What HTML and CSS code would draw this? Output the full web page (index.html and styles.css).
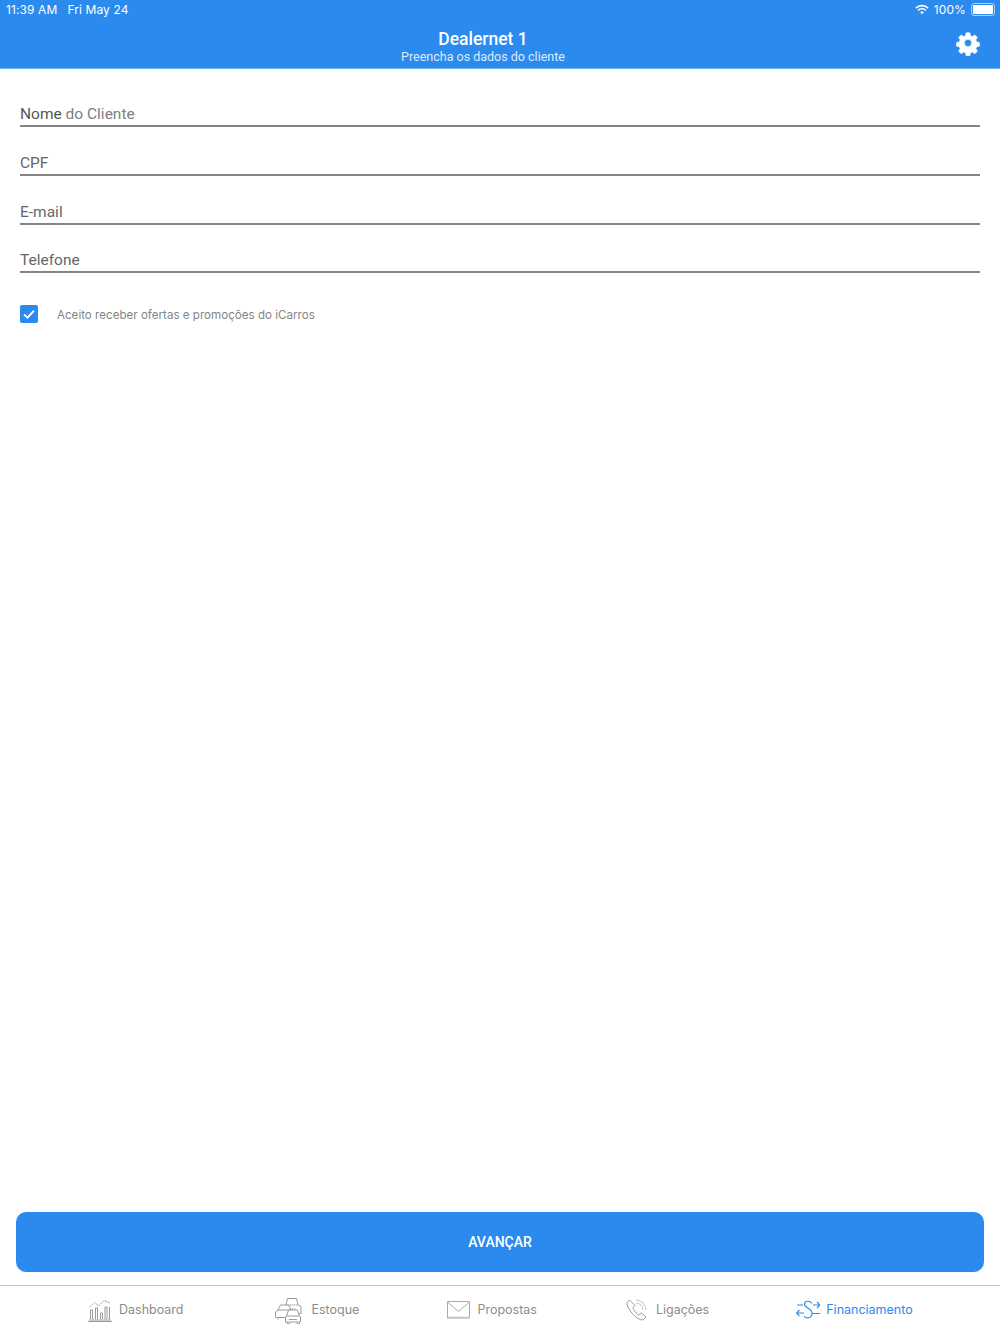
FILE: index.html
```html
<!DOCTYPE html>
<html lang="pt-BR">
<head>
    <meta charset="UTF-8">
    <meta name="viewport" content="width=device-width, initial-scale=1.0">
    <title>Dealernet 1</title>
    <link rel="stylesheet" href="styles.css">
</head>
<body>
    <div class="app">
        <header class="header">
            <div class="status-bar">
                <div class="status-left">
                    <span>11:39 AM</span>
                    <span>Fri May 24</span>
                </div>
                <div class="status-right">
                    <svg class="wifi" viewBox="0 0 16 12" width="14" height="11">
                        <path d="M1 4.4a10 10 0 0 1 14 0" fill="none" stroke="#fff" stroke-width="1.8"/>
                        <path d="M3.6 7a6.300 6.300 0 0 1 8.800 0" fill="none" stroke="#fff" stroke-width="1.8"/>
                        <path d="M5.900 9.100a3 3 0 0 1 4.200 0L8 11.400z" fill="#fff"/>
                    </svg>
                    <span>100%</span>
                    <div class="battery"><div class="battery-fill"></div></div>
                </div>
            </div>
            <div class="nav-bar">
                <div class="nav-titles">
                    <div class="nav-title">Dealernet 1</div>
                    <div class="nav-subtitle">Preencha os dados do cliente</div>
                </div>
                <svg class="gear" viewBox="0 0 24 24" width="26" height="26">
                    <path fill="#fff" stroke="#fff" stroke-width=".7" stroke-linejoin="round" fill-rule="evenodd" d="M10 1h4l.6 3 2.200.9 2.600-1.700 2.800 2.800-1.700 2.600.9 2.200 3 .6v4l-3 .6-.9 2.200 1.700 2.600-2.800 2.800-2.600-1.700-2.200.9-.6 3h-4l-.6-3-2.200-.9-2.600 1.700-2.800-2.800 1.700-2.600-.9-2.200-3-.6v-4l3-.6.9-2.200-1.700-2.600 2.800-2.800 2.600 1.700 2.200-.9zM12 8a4 4 0 1 0 0 8 4 4 0 0 0 0-8z" transform="translate(1.800 1.800) scale(.85)"/>
                </svg>
            </div>
        </header>

        <main class="form">
            <div class="field"><span class="filled">Nome</span> <span class="hint">do Cliente</span></div>
            <div class="field">CPF</div>
            <div class="field">E-mail</div>
            <div class="field">Telefone</div>
            <div class="optin">
                <div class="checkbox">
                    <svg viewBox="0 0 18 18" width="18" height="18">
                        <path d="M4 9.400l3.500 3.300L14 5.600" fill="none" stroke="#fff" stroke-width="2"/>
                    </svg>
                </div>
                <span class="optin-label">Aceito receber ofertas e promoções do iCarros</span>
            </div>
        </main>

        <div class="actions">
            <button class="next-btn">AVANÇAR</button>
        </div>

        <nav class="tabs">
            <div class="tab">
                <svg viewBox="0 0 24 24" width="24" height="24" fill="none" stroke="#9a9a9a" stroke-width="1">
                    <path d="M0 23.500h24M1 22h22"/>
                    <path d="M2.500 21v-9M4.500 21v-9M2.500 12h2M7.500 21V10M9.500 21V10M7.500 10h2M12.500 21v-6M14.500 21v-6M12.500 15h2M17 21V9M19 21V9M17 9h2M21.500 21V9"/>
                    <path d="M1.500 9l5-4.500 4.500 3.500 5-5.500 6 2.500" stroke-dasharray="2 1"/>
                </svg>
                <span>Dashboard</span>
            </div>
            <div class="tab tab-wide">
                <svg viewBox="0 0 27 27" width="27" height="27" fill="#fff" stroke="#9a9a9a" stroke-width="1">
                    <path d="M11 8l1.500-6.500h9L23 8l3 1.500v7H11z"/>
                    <path d="M11 8h12M13 12h8" stroke-dasharray="1.500 .5"/>
                    <path d="M3 13l2.500-5h8L16 13l1 1v6.500H.5V15z"/>
                    <path d="M3 13h13M3 20.500v2M14 20.500v2"/>
                    <path d="M11.500 19l2-6h9l2 6 1 1v5H10.500v-5z"/>
                    <path d="M12 19h12M14 22.500h8M12 25v1.500h2.500V25M22 25v1.500h2.500V25"/>
                </svg>
                <span>Estoque</span>
            </div>
            <div class="tab">
                <svg viewBox="0 0 23 18" width="23" height="18" fill="none" stroke="#aaaaaa" stroke-width="1">
                    <path d="M.5.5h22v16.500H.5zM.5 1l11 9.500L22.500 1"/>
                    <path d="M1 16.500h21" stroke="#c4c4c4" stroke-width="1.500"/>
                </svg>
                <span>Propostas</span>
            </div>
            <div class="tab tab-phone">
                <svg viewBox="0 0 22 22" width="22" height="22" fill="none" stroke="#9a9a9a" stroke-width="1">
                    <path d="M3.500 1L1 3.500c-.5 6 9.500 18 16 17.500l3-3-4.500-4-2.500 2c-2-.5-6-5.500-6-7.500l2-2z"/>
                    <path d="M10 4a7 7 0 0 1 7 7M10 1a10 10 0 0 1 10 10" stroke="#c4c4c4"/>
                </svg>
                <span>Ligações</span>
            </div>
            <div class="tab tab-active">
                <svg viewBox="0 0 24 20" width="24" height="20" fill="none" stroke="#2a8aee" stroke-width="1.100">
                    <path d="M1 5h6M17 5h7M21 2l3 3-3 3M8 13H.5M3.500 10l-3 3 3 3M16 13.500h8"/>
                    <path d="M16 3.500C14 .5 9 .5 8.500 4 8 8 16 8 16 13c0 5.500-6 6-8 3"/>
                </svg>
                <span>Financiamento</span>
            </div>
        </nav>
    </div>
</body>
</html>
```

FILE: styles.css
```css
body {
    margin: 0;
    background: #FFFFFF;
    font-family: 'Roboto', Arial, sans-serif;
}
.app {
    height: 1334px;
    display: flex;
    flex-direction: column;
}
.header {
    height: 68px;
    background: #2A8AEE;
    color: #FFFFFF;
    border-bottom: 1px solid #6FB1F4;
    flex-shrink: 0;
}
.status-bar {
    height: 19px;
    padding: 0 5px 0 6px;
    display: flex;
    justify-content: space-between;
    align-items: center;
    font-family: 'Inter', Arial, sans-serif;
    font-size: 12px;
    letter-spacing: 0.1px;
}
.status-left {
    display: flex;
    gap: 10px;
}
.status-right {
    display: flex;
    align-items: center;
    gap: 5px;
}
.battery {
    width: 20px;
    height: 9px;
    padding: 1px;
    border: 1px solid rgba(255, 255, 255, 0.6);
    border-radius: 3px;
}
.battery-fill {
    height: 100%;
    background: #FFFFFF;
    border-radius: 1px;
}
.nav-bar {
    height: 49px;
    padding: 0 19px 0 0;
    display: flex;
    align-items: center;
    justify-content: space-between;
}
.nav-titles {
    flex: 1;
    padding: 6px 0 0 11px;
    text-align: center;
}
.nav-title {
    font-size: 17.500px;
    font-weight: 500;
    line-height: 20px;
}
.nav-subtitle {
    font-size: 12.500px;
    line-height: 16px;
    color: #DCEBFC;
}
.gear {
    margin-bottom: 2px;
}
.form {
    flex: 1;
    padding: 28px 20px 0;
}
.field {
    height: 28px;
    margin-bottom: 18.800px;
    border-bottom: 2px solid #848484;
    font-size: 15.500px;
    line-height: 34px;
    color: #666666;
}
.filled {
    color: #555555;
}
.hint {
    color: #808080;
}
.optin {
    display: flex;
    align-items: center;
    gap: 19px;
    margin-top: 32px;
    font-family: 'Inter', Arial, sans-serif;
    font-size: 11.600px;
    color: #858585;
}
.optin-label {
    padding-top: 2px;
}
.checkbox {
    width: 18px;
    height: 18px;
    background: #2A8AEE;
    border-radius: 2px;
}
.checkbox svg {
    display: block;
}
.actions {
    padding: 0 16px 13px;
}
.next-btn {
    width: 100%;
    height: 60px;
    display: block;
    background: #2A8AEE;
    color: #FFFFFF;
    border: none;
    border-radius: 10px;
    font-family: 'Roboto', Arial, sans-serif;
    font-size: 14px;
    font-weight: 500;
}
.tabs {
    height: 48px;
    padding: 0 0 0 88px;
    display: flex;
    gap: 88px;
    align-items: center;
    border-top: 1px solid #C4C4C4;
}
.tab {
    display: flex;
    align-items: center;
    gap: 7px;
    font-family: 'Inter', Arial, sans-serif;
    font-size: 12.500px;
    color: #8C8C8C;
}
.tab span {
    padding-bottom: 2px;
}
.tab-wide {
    gap: 9px;
    margin-left: 4px;
}
.tab-phone {
    gap: 8px;
    margin-left: 1px;
}
.tab-active {
    color: #2A8AEE;
    gap: 6px;
    margin-left: -1px;
}
```
